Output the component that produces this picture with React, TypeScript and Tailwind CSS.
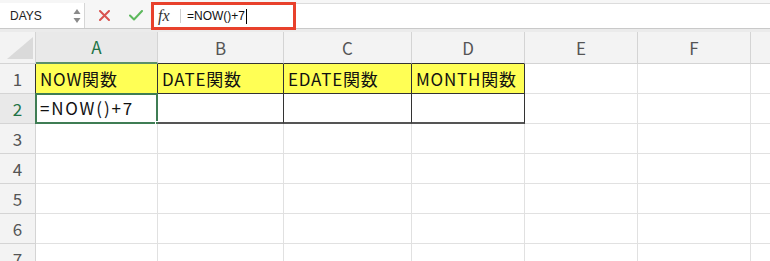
import React from 'react';

const cols = [
    { name: 'A', w: 'w-[122px]' },
    { name: 'B', w: 'w-[126px]' },
    { name: 'C', w: 'w-[128px]' },
    { name: 'D', w: 'w-[113px]' },
    { name: 'E', w: 'w-[113px]' },
    { name: 'F', w: 'w-[113px]' },
];

const headers = ['NOW関数', 'DATE関数', 'EDATE関数', 'MONTH関数'];
const font = { fontFamily: '"Noto Sans CJK JP", "Noto Sans", sans-serif' };

function Toolbar() {
    return (
        <div className="flex h-[29px] items-stretch border-b border-[#c9c9c9] bg-[#f6f6f6] pt-[3px]" style={{ fontFamily: '"Liberation Sans", Arial, sans-serif' }}>
            {/* Name box */}
            <div className="flex h-[25px] w-[85px] items-center justify-between border-r border-[#d6d6d6] bg-white pl-[10px] pr-[3px]">
                <span className="text-[12px] text-[#222]">DAYS</span>
                <svg width="8" height="16" viewBox="0 0 8 16" className="text-[#8a8a8a]">
                    <path d="M4 1 L7.5 6 H0.5 Z" fill="currentColor" />
                    <path d="M4 15 L7.5 10 H0.5 Z" fill="currentColor" />
                </svg>
            </div>

            {/* Cancel / enter */}
            <div className="flex w-[66px] items-center gap-[19px] pl-[14px]">
                <svg width="11" height="11" viewBox="0 0 11 11">
                    <path d="M1 1 L10 10 M10 1 L1 10" stroke="#d9534f" strokeWidth="2" strokeLinecap="round" />
                </svg>
                <svg width="14" height="11" viewBox="0 0 14 11">
                    <path d="M1 5.5 L5 9.5 L13 1" stroke="#5cb85c" strokeWidth="2" fill="none" strokeLinecap="round" strokeLinejoin="round" />
                </svg>
            </div>

            {/* Formula bar */}
            <div className="flex flex-1 items-stretch bg-white">
                <div className="-mt-[1px] flex h-[28px] w-[145px] items-center border-[3px] border-[#e8412c] bg-white">
                    <span className="w-[26px] pl-[4px] text-[16px] italic text-[#333]" style={{ fontFamily: '"Liberation Serif", serif' }}>
                        fx
                    </span>
                    <div className="h-[14px] w-px bg-[#cfcfcf]" />
                    <span className="pl-[6px] text-[12px] text-[#111]">=NOW()+7</span>
                    <div className="ml-[1px] h-[15px] w-px bg-black" />
                </div>
                <div className="flex-1 border-t border-[#dcdcdc]" />
            </div>
        </div>
    );
}

function Sheet() {
    const rows = [1, 2, 3, 4, 5, 6, 7];
    return (
        <div className="border-t-[3px] border-[#ebebeb]" style={font}>
            {/* Column header row */}
            <div className="flex h-[32px]">
                <div className="relative w-[36px] shrink-0 border-r border-b border-[#d4d4d4] bg-[#f3f3f3]">
                    <svg className="absolute bottom-[4px] right-[2px]" width="26" height="22" viewBox="0 0 26 22">
                        <path d="M26 0 V22 H0 Z" fill="#dadada" />
                    </svg>
                </div>
                {cols.map((c, i) => (
                    <div
                        key={c.name}
                        className={`${c.w} shrink-0 flex items-center justify-center border-r text-[17px] ${
                            i === 0
                                ? 'border-[#d4d4d4] border-b-2 border-b-[#5a8f6a] bg-[#e9e9e9] text-[#217346]'
                                : i < 4
                                  ? 'border-[#d4d4d4] border-b border-b-[#333] bg-[#f3f3f3] text-[#555]'
                                  : 'border-[#d4d4d4] border-b bg-[#f3f3f3] text-[#555]'
                        }`}
                    >
                        {c.name}
                    </div>
                ))}
                <div className="flex-1 border-b border-[#d4d4d4] bg-[#f3f3f3]" />
            </div>

            {rows.map((r) => (
                <div key={r} className="flex h-[30px]">
                    <div
                        className={`flex w-[36px] shrink-0 items-center justify-center border-b border-r text-[17px] ${
                            r === 2 ? 'bg-[#e9e9e9] text-[#217346]' : 'bg-[#f3f3f3] text-[#555]'
                        } ${r <= 2 ? 'border-b-[#d4d4d4] border-r-[#333]' : 'border-[#d4d4d4]'}`}
                    >
                        {r}
                    </div>
                    {cols.map((c, i) => {
                        const inTable = r <= 2 && i < 4;
                        const selected = r === 2 && i === 0;
                        return (
                            <div
                                key={c.name}
                                className={`${c.w} relative shrink-0 flex items-center overflow-visible whitespace-nowrap pl-[4px] text-[17px] tracking-[0.8px] text-[#111] ${
                                    inTable
                                        ? `border-r border-r-[#333] ${r === 2 ? 'border-b-2 border-b-[#555]' : 'border-b border-b-[#333]'}`
                                        : 'border-r border-b border-[#e1e1e1]'
                                } ${r === 1 && i < 4 ? 'bg-[#ffff55]' : 'bg-white'}`}
                            >
                                {r === 1 && i < 4 ? headers[i] : null}
                                {selected ? (
                                    <>
                                        <span className="tracking-[1.8px]">=NOW()+7</span>
                                        <div className="absolute -left-px -top-px -right-px -bottom-[2px] border-2 border-[#3f7d54]" />
                                        <div className="absolute -bottom-[4px] -right-[3px] h-[5px] w-[5px] border border-white bg-[#3f7d54]" />
                                    </>
                                ) : null}
                            </div>
                        );
                    })}
                    <div className="flex-1 border-b border-[#e1e1e1] bg-white" />
                </div>
            ))}
        </div>
    );
}

export default function App() {
    return (
        <div className="h-[261px] w-[770px] overflow-hidden bg-white">
            <Toolbar />
            <Sheet />
        </div>
    );
}
